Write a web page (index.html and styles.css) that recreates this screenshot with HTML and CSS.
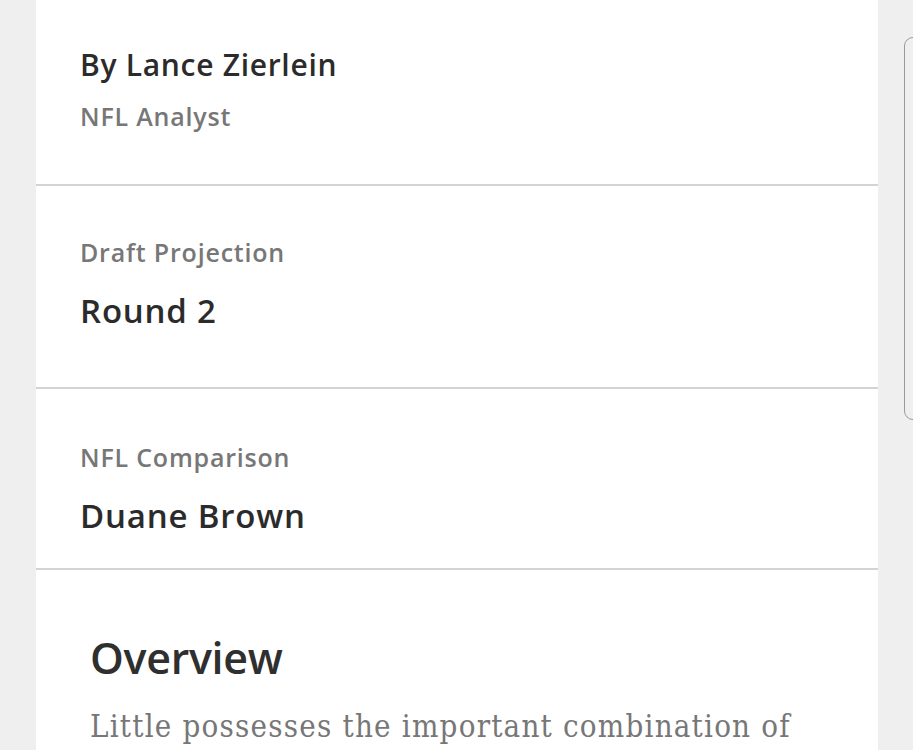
FILE: index.html
```html
<!DOCTYPE html>
<html lang="en">
<head>
  <meta charset="UTF-8">
  <title>Prospect Profile</title>
  <link rel="stylesheet" href="styles.css">
</head>
<body>
  <div class="page">
    <div class="card">
      <!-- author -->
      <div class="section author">
        <div class="value">By Lance Zierlein</div>
        <div class="label">NFL Analyst</div>
      </div>

      <div class="section projection">
        <div class="label">Draft Projection</div>
        <div class="value big">Round 2</div>
      </div>

      <div class="section comparison">
        <div class="label">NFL Comparison</div>
        <div class="value big">Duane Brown</div>
      </div>

      <!-- overview text -->
      <div class="overview">
        <h2>Overview</h2>
        <p>Little possesses the important combination of</p>
      </div>
    </div>
    <div class="side-panel"></div>
  </div>
</body>
</html>
```
FILE: styles.css
```css
body {
  margin: 0;
  background: #efefef;
  font-family: "Open Sans", Arial, sans-serif;
  overflow: hidden;
}
.page {
  display: flex;
  align-items: flex-start;
  gap: 26px;
  padding-left: 36px;
}
.card {
  background: #fff;
  width: 842px;
  flex-shrink: 0;
  height: 750px;
}
.section {
  padding: 0 44px;
  border-bottom: 2px solid #d3d3d3;
  box-sizing: border-box;
}
.author {
  height: 186px;
  padding-top: 45px;
}
.projection {
  height: 203px;
  padding-top: 49px;
}
.comparison {
  height: 181px;
  padding-top: 51px;
}
.label {
  color: #777;
  font-size: 25px;
  font-weight: 600;
  letter-spacing: 0.8px;
  line-height: 34px;
}
.value {
  color: #2b2b2b;
  font-size: 30px;
  font-weight: 600;
  letter-spacing: 0.7px;
  line-height: 40px;
}
.author .label {
  margin-top: 14px;
}
.value.big {
  font-size: 33px;
  letter-spacing: 0.8px;
  margin-top: 22px;
}
.overview {
  padding: 62px 54px 0;
}
.overview h2 {
  margin: 0;
  font-family: "Open Sans", sans-serif;
  font-size: 43px;
  font-weight: 600;
  letter-spacing: -0.3px;
  line-height: 52px;
  color: #2f2f2f;
}
.overview p {
  margin: 20px 0 0;
  font-family: "DejaVu Serif", serif;
  font-stretch: condensed;
  font-size: 31px;
  letter-spacing: 1.2px;
  line-height: 44px;
  color: #777;
}
.side-panel {
  flex-shrink: 0;
  width: 40px;
  height: 381px;
  margin-top: 37px;
  border: 1.5px solid #9a9a9a;
  border-radius: 9px;
}
```
